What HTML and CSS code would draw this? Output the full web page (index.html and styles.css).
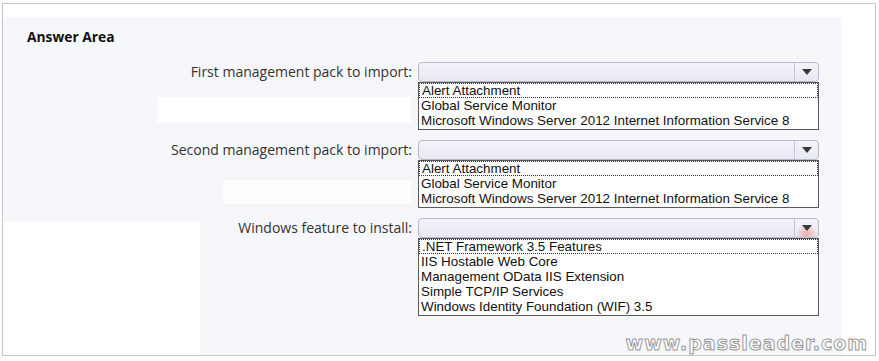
FILE: index.html
```html
<!DOCTYPE html>
<html lang="en">

<head>
    <meta charset="UTF-8">
    <meta name="viewport" content="width=device-width, initial-scale=1.0">
    <link rel="stylesheet" href="styles.css">
</head>

<body>
    <div class="frame">
        <div class="panel">
            <h2 class="area-title">Answer Area</h2>
            <div class="question-grid">
                <div class="q-label">First management pack to import:</div>
                <div class="q-control">
                    <div class="dropdown">
                        <span class="dropdown-value"></span>
                        <span class="dropdown-arrow"><span class="arrow-tri"></span></span>
                    </div>
                    <ul class="listbox">
                        <li class="list-item focused">Alert Attachment</li>
                        <li class="list-item">Global Service Monitor</li>
                        <li class="list-item">Microsoft Windows Server 2012 Internet Information Service 8</li>
                    </ul>
                </div>

                <div class="q-label">Second management pack to import:</div>
                <div class="q-control">
                    <div class="dropdown">
                        <span class="dropdown-value"></span>
                        <span class="dropdown-arrow"><span class="arrow-tri"></span></span>
                    </div>
                    <ul class="listbox">
                        <li class="list-item focused">Alert Attachment</li>
                        <li class="list-item">Global Service Monitor</li>
                        <li class="list-item">Microsoft Windows Server 2012 Internet Information Service 8</li>
                    </ul>
                </div>

                <div class="q-label">Windows feature to install:</div>
                <div class="q-control">
                    <div class="dropdown">
                        <span class="dropdown-value"></span>
                        <span class="dropdown-arrow hover"><span class="arrow-tri"></span></span>
                    </div>
                    <ul class="listbox">
                        <li class="list-item focused">.NET Framework 3.5 Features</li>
                        <li class="list-item">IIS Hostable Web Core</li>
                        <li class="list-item">Management OData IIS Extension</li>
                        <li class="list-item">Simple TCP/IP Services</li>
                        <li class="list-item">Windows Identity Foundation (WIF) 3.5</li>
                    </ul>
                </div>
            </div>
            <div class="watermark">www.passleader.com</div>
        </div>
    </div>
</body>

</html>
```

FILE: styles.css
```css
body {
    margin: 0;
    background: #ffffff;
}

.frame {
    width: 872px;
    height: 351px;
    margin: 3px 0 0 2px;
    border: 1px solid #c6c6c6;
    background: #ffffff;
}

.panel {
    position: relative;
    width: 839px;
    height: 338px;
    margin-top: 13px;
    background-color: #f6f7fb;
    /* the lighter patches of the scanned picture */
    background-image:
        linear-gradient(#ffffff, #ffffff),
        linear-gradient(#ffffff, #ffffff),
        linear-gradient(#fdfdfe, #fdfdfe);
    background-size: 197px 133px, 252px 26px, 188px 24px;
    background-position: 0 205px, 155px 80px, 220px 163px;
    background-repeat: no-repeat;
}

.area-title {
    margin: 0;
    padding: 11px 0 0 24px;
    font-family: 'Open Sans', sans-serif;
    font-weight: bold;
    font-size: 13.8px;
    line-height: 18px;
    color: #111111;
}

.question-grid {
    display: grid;
    grid-template-columns: 409px 401px;
    column-gap: 6px;
    row-gap: 10px;
    margin-top: 16px;
}

.q-label {
    text-align: right;
    font-family: 'Open Sans', sans-serif;
    font-size: 14px;
    line-height: 20px;
    color: #333333;
}

.q-control {
    display: flex;
    flex-direction: column;
}

.dropdown {
    display: flex;
    height: 18px;
    border: 1px solid #b6b8cc;
    border-radius: 4px;
    background: linear-gradient(#f3f3fa, #e8e8f3);
}

.dropdown-value {
    flex: 1;
}

.dropdown-arrow {
    display: flex;
    align-items: center;
    justify-content: center;
    width: 23px;
    border-left: 1px solid #c4c6d6;
}

.dropdown-arrow.hover {
    background: radial-gradient(circle at 50% 85%, rgba(240, 130, 110, 0.6), rgba(240, 160, 150, 0) 55%);
}

.arrow-tri {
    width: 0;
    height: 0;
    border-left: 5px solid transparent;
    border-right: 5px solid transparent;
    border-top: 6px solid #3a3a3a;
}

.listbox {
    margin: 0;
    padding: 0 0 1px 0;
    list-style: none;
    border: 1px solid #5a5a5a;
    background: #ffffff;
}

.list-item {
    height: 15px;
    padding-left: 2px;
    font-family: 'Liberation Sans', Arial, sans-serif;
    font-size: 13.4px;
    line-height: 15px;
    color: #111111;
    white-space: nowrap;
}

.list-item.focused {
    height: 13px;
    line-height: 13px;
    border: 1px dotted #333333;
}

.watermark {
    position: absolute;
    right: -26px;
    bottom: 1px;
    font-family: 'DejaVu Sans', sans-serif;
    font-weight: bold;
    font-size: 19px;
    letter-spacing: 1px;
    color: #ffffff;
    -webkit-text-stroke: 1px #9a9a9a;
}
```
